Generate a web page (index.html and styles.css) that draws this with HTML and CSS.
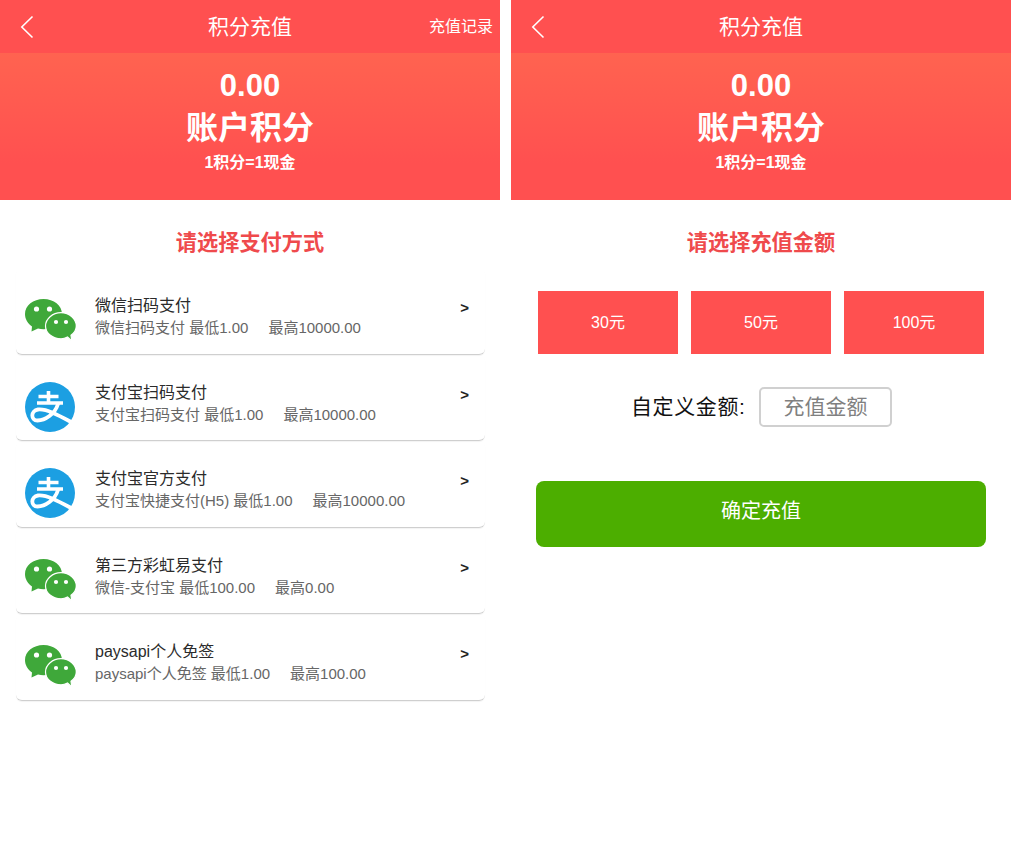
FILE: index.html
```html
<!DOCTYPE html>
<html lang="zh-CN">
<head>
<meta charset="utf-8">
<title>积分充值</title>
<link rel="stylesheet" href="styles.css">
</head>
<body>
<svg class="defs" width="0" height="0" aria-hidden="true">
  <symbol id="wechat" viewBox="0 0 51 44">
    <path fill="#3fa83a" d="M7 28.500 6.500 33.500 13 30.500C15 31 16.500 31.200 18.500 31.200 28.800 31.200 37 24.500 37 16 37 7.600 28.800 1 18.500 1 8.300 1 0 7.600 0 16 0 21 2.700 25.500 7 28.500z"/>
    <path fill="#3fa83a" stroke="#fff" stroke-width="1.200" d="M42.500 38.900 46.800 43 46 37.200C49.200 34.900 51.300 31.700 51.300 28 51.300 20.900 44.600 14.700 36 14.700 27.500 14.700 20.500 20.900 20.500 28 20.500 35.100 27.500 40.800 36 40.800 38.300 40.800 40.500 40.100 42.500 38.900z"/>
    <circle cx="11.500" cy="11" r="2.600" fill="#fff"/>
    <circle cx="24.500" cy="11" r="2.600" fill="#fff"/>
    <circle cx="31" cy="24" r="2.100" fill="#fff"/>
    <circle cx="41" cy="24" r="2.100" fill="#fff"/>
  </symbol>
  <symbol id="alipay" viewBox="0 0 50 50">
    <circle cx="25" cy="25" r="25" fill="#1c9fe2"/>
    <path fill="none" stroke="#fff" stroke-width="3.600" d="M13.500 14.500h20M23.500 9v12M12 21h26"/>
    <path fill="none" stroke="#fff" stroke-width="3.800" stroke-linecap="round" d="M33 22C30 32 20 38.500 12.500 38.500 5.500 38.500 5.500 28.500 13 27.500 22 26.500 35 34 48 41"/>
  </symbol>
</svg>
<div class="page">
  <section class="phone">
    <header class="topbar">
      <svg class="back" viewBox="0 0 14 24" aria-hidden="true"><path d="M12.500 1.500 1.800 12l10.700 10.500"/></svg>
      <h1 class="topbar-title">积分充值</h1>
      <a class="topbar-link">充值记录</a>
    </header>
    <div class="hero">
      <div class="hero-value">0.00</div>
      <div class="hero-label">账户积分</div>
      <div class="hero-note">1积分=1现金</div>
    </div>
    <h2 class="section-title">请选择支付方式</h2>
    <ul class="pay-list">
      <li class="pay-item">
        <svg class="pay-icon"><use href="#wechat"/></svg>
        <div class="pay-text">
          <div class="pay-name">微信扫码支付</div>
          <div class="pay-desc">微信扫码支付 最低1.00<span class="pay-max">最高10000.00</span></div>
        </div>
        <span class="pay-arrow">&gt;</span>
      </li>
      <li class="pay-item">
        <svg class="pay-icon pay-icon-round"><use href="#alipay"/></svg>
        <div class="pay-text">
          <div class="pay-name">支付宝扫码支付</div>
          <div class="pay-desc">支付宝扫码支付 最低1.00<span class="pay-max">最高10000.00</span></div>
        </div>
        <span class="pay-arrow">&gt;</span>
      </li>
      <li class="pay-item">
        <svg class="pay-icon pay-icon-round"><use href="#alipay"/></svg>
        <div class="pay-text">
          <div class="pay-name">支付宝官方支付</div>
          <div class="pay-desc">支付宝快捷支付(H5) 最低1.00<span class="pay-max">最高10000.00</span></div>
        </div>
        <span class="pay-arrow">&gt;</span>
      </li>
      <li class="pay-item">
        <svg class="pay-icon"><use href="#wechat"/></svg>
        <div class="pay-text">
          <div class="pay-name">第三方彩虹易支付</div>
          <div class="pay-desc">微信-支付宝 最低100.00<span class="pay-max">最高0.00</span></div>
        </div>
        <span class="pay-arrow">&gt;</span>
      </li>
      <li class="pay-item">
        <svg class="pay-icon"><use href="#wechat"/></svg>
        <div class="pay-text">
          <div class="pay-name">paysapi个人免签</div>
          <div class="pay-desc">paysapi个人免签 最低1.00<span class="pay-max">最高100.00</span></div>
        </div>
        <span class="pay-arrow">&gt;</span>
      </li>
    </ul>
  </section>
  <section class="phone">
    <header class="topbar">
      <svg class="back" viewBox="0 0 14 24" aria-hidden="true"><path d="M12.500 1.500 1.800 12l10.700 10.500"/></svg>
      <h1 class="topbar-title">积分充值</h1>
    </header>
    <div class="hero">
      <div class="hero-value">0.00</div>
      <div class="hero-label">账户积分</div>
      <div class="hero-note">1积分=1现金</div>
    </div>
    <h2 class="section-title">请选择充值金额</h2>
    <div class="amounts">
      <div class="amount">30元</div>
      <div class="amount">50元</div>
      <div class="amount">100元</div>
    </div>
    <div class="custom">
      <label class="custom-label">自定义金额:</label>
      <div class="custom-input">充值金额</div>
    </div>
    <div class="submit">确定充值</div>
  </section>
</div>
</body>
</html>
```
FILE: styles.css
```css
* { box-sizing: border-box; }
html, body { margin: 0; padding: 0; background: #fff; }
body { font-family: "Liberation Sans", "Noto Sans CJK SC", sans-serif; }
.defs { position: absolute; }
.page { display: flex; gap: 11px; width: 1011px; height: 868px; overflow: hidden; }
.phone { width: 500px; flex: none; }
.topbar { position: relative; height: 53px; background: #ff5050; display: flex; align-items: center; justify-content: center; color: #fff; }
.back { position: absolute; left: 20px; top: 15px; width: 14px; height: 24px; fill: none; stroke: #fff; stroke-width: 1.600; }
.topbar-title { margin: 0; font-size: 21px; font-weight: 400; line-height: 53px; }
.topbar-link { position: absolute; right: 7px; top: 0; font-size: 16px; line-height: 53px; }
.hero { height: 147px; padding-top: 15px; text-align: center; color: #fff; font-weight: 700; background: linear-gradient(#ff6350, #ff5050 75%); }
.hero-value { font-size: 31px; line-height: 36px; }
.hero-label { margin-top: 1px; font-size: 32px; line-height: 46px; }
.hero-note { margin-top: 1px; font-size: 16px; line-height: 22px; }
.section-title { margin: 0; padding-top: 28px; height: 68px; font-size: 21.200px; line-height: 30px; font-weight: 700; color: #ef4a4c; text-align: center; }
.pay-list { list-style: none; margin: 0 15px 0 16px; padding: 0; }
.pay-item { height: 86.500px; display: flex; align-items: flex-start; padding: 27px 16px 0 9px; border-bottom: 1.500px solid #cfcfcf; border-radius: 6px; box-shadow: 0 1px 1px rgba(0,0,0,.05); }
.pay-icon { width: 51px; height: 44px; margin-top: 3px; flex: none; }
.pay-icon-round { width: 50px; height: 50px; margin-top: 0; margin-right: 1px; }
.pay-text { flex: 1; margin-left: 19px; }
.pay-name { font-size: 16px; line-height: 22px; color: #2b2b2b; }
.pay-desc { font-size: 15px; line-height: 22px; color: #666; }
.pay-max { margin-left: 20px; }
.pay-arrow { margin-top: -1px; font-size: 15px; font-weight: 700; line-height: 28px; color: #222; }
.amounts { display: flex; gap: 13px; padding: 0 27px; margin-top: 23px; }
.amount { width: 140px; height: 63px; background: #ff5050; color: #fff; font-size: 16px; line-height: 63px; text-align: center; }
.custom { display: flex; align-items: center; gap: 14px; margin-top: 33px; padding-left: 120px; }
.custom-label { width: 114px; font-size: 21px; letter-spacing: .6px; line-height: 40px; color: #111; white-space: nowrap; }
.custom-input { width: 133px; height: 40px; border: 2px solid #d0d0d0; border-radius: 5px; font-size: 21px; line-height: 36px; color: #808080; text-align: center; }
.submit { height: 66px; margin: 54px 25px 0; background: #4cae00; border-radius: 8px; color: #fff; font-size: 20px; line-height: 60px; text-align: center; }
```
